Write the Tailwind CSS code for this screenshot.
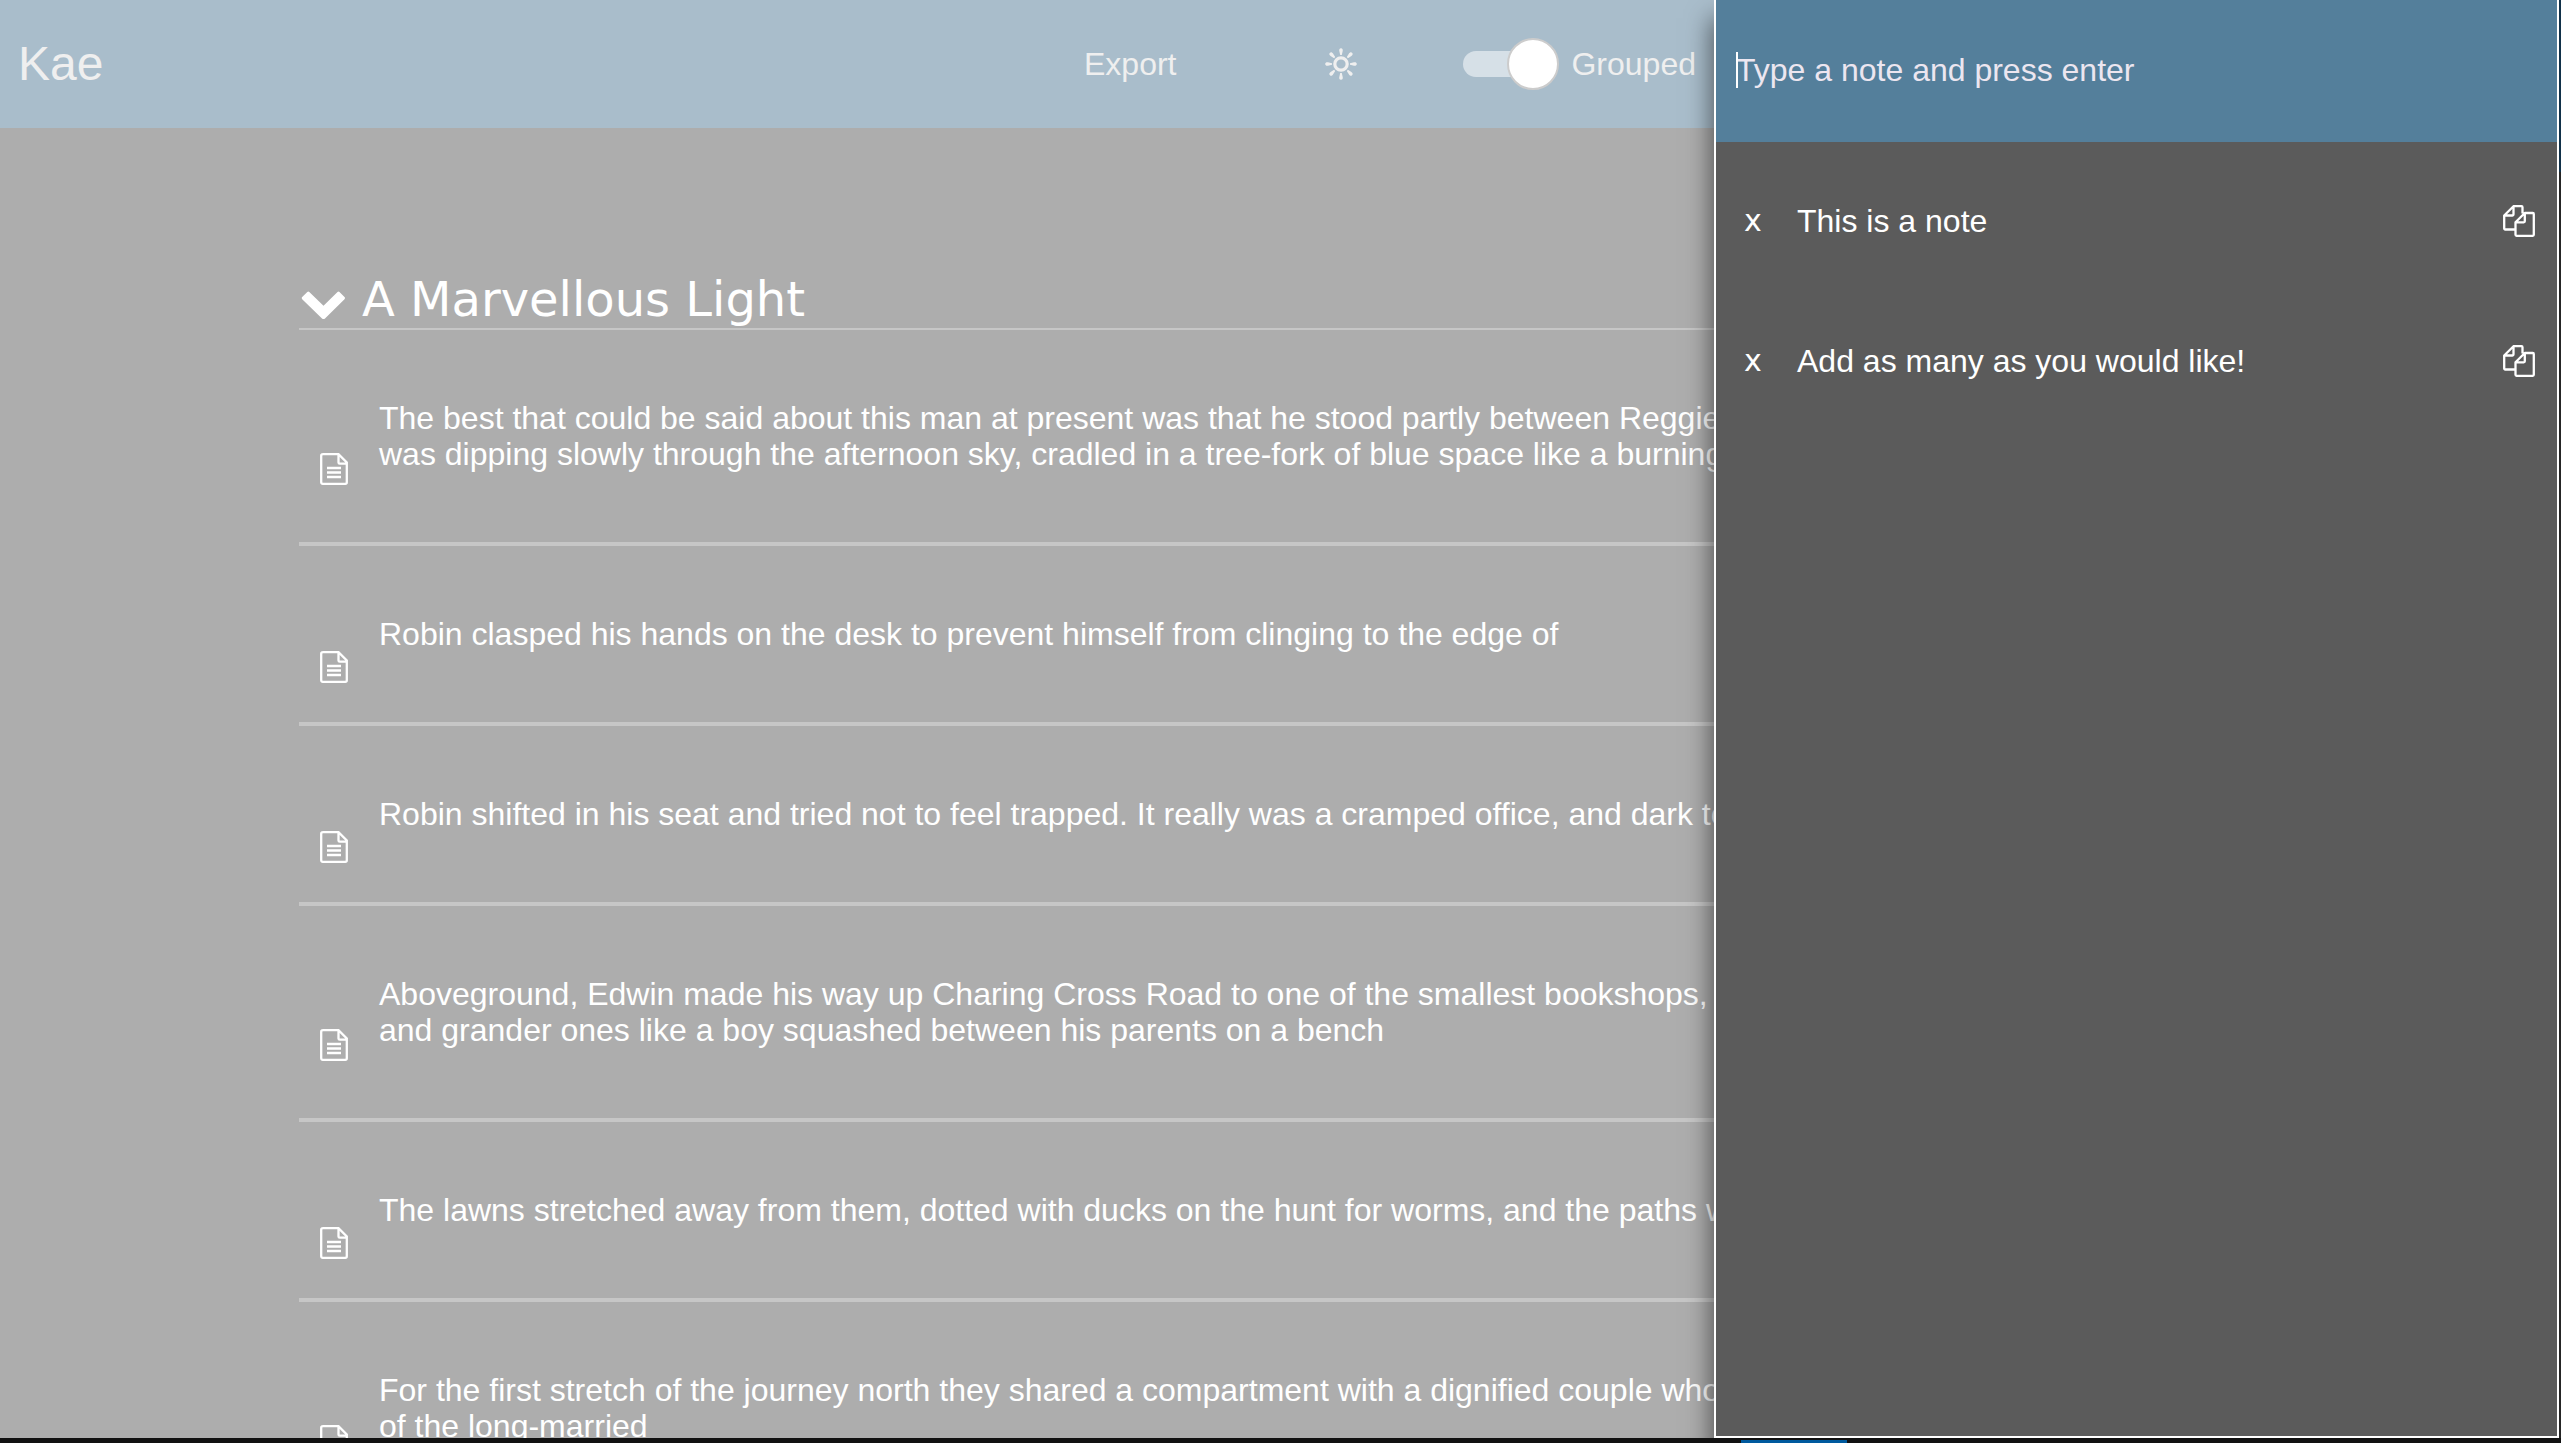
<!DOCTYPE html>
<html lang="en">
<head>
<meta charset="utf-8">
<title>Kae</title>
<script src="https://cdn.jsdelivr.net/npm/@tailwindcss/browser@4"></script>
</head>
<body class="h-screen overflow-hidden flex bg-[#111111] font-['Liberation_Sans',Arial,sans-serif] text-[32px] leading-9">
<svg class="hidden" aria-hidden="true">
  <symbol id="doc" viewBox="0 0 28 32"><path d="M2.500 1.200H18.500L26.800 9.500V29.300a1.500 1.500 0 0 1-1.500 1.500H2.700a1.500 1.500 0 0 1-1.500-1.500V2.700A1.500 1.500 0 0 1 2.700 1.200M18.500 1.200V9.500a1.200 1.200 0 0 0 1.200 1.200H26.800M7 15H21M7 19.500H21M7 24H21" fill="none" stroke="currentColor" stroke-width="2.300"/></symbol>
  <symbol id="copy" viewBox="0 0 32 32"><path d="M10.500 1.200H18.500a1 1 0 0 1 1 1V8.500M12.500 24.500H2.200a1 1 0 0 1-1-1V10.500L10.500 1.200V9.500a1 1 0 0 1-1 1H1.200M21.800 8H29.800a1 1 0 0 1 1 1V29.800a1 1 0 0 1-1 1H13.500a1 1 0 0 1-1-1V17.300L21.800 8V16.300a1 1 0 0 1-1 1H12.500" fill="none" stroke="currentColor" stroke-width="2.300" stroke-linejoin="round"/></symbol>
  <symbol id="ray" viewBox="0 0 32 32"><path d="M16 0.200C14.400 0.200 14 1.700 14.300 3L15.200 7H16.800L17.700 3C18 1.700 17.600 0.200 16 0.200Z"/></symbol>
</svg>
<div class="relative flex-1 mb-[5px] mr-[2px] overflow-hidden bg-[#adadad]">
  <header class="h-32 flex items-center bg-[#a9bdcb] text-[#efefef]">
    <h1 class="pl-[18px] text-[48px] leading-none flex-1">Kae</h1>
    <div class="flex items-center mr-[863px]">
      <button type="button" class="mr-[149px]">Export</button>
      <button type="button" aria-label="Theme" class="mr-[106px]">
        <svg class="block size-8" viewBox="0 0 32 32" fill="currentColor"><circle cx="16" cy="16" r="6.200" fill="none" stroke="currentColor" stroke-width="3.200"/><g id="rays"><use href="#ray" width="32" height="32"/><use href="#ray" width="32" height="32" transform="rotate(45 16 16)"/><use href="#ray" width="32" height="32" transform="rotate(90 16 16)"/><use href="#ray" width="32" height="32" transform="rotate(135 16 16)"/><use href="#ray" width="32" height="32" transform="rotate(180 16 16)"/><use href="#ray" width="32" height="32" transform="rotate(225 16 16)"/><use href="#ray" width="32" height="32" transform="rotate(270 16 16)"/><use href="#ray" width="32" height="32" transform="rotate(315 16 16)"/></g></svg>
      </button>
      <label class="flex items-center gap-3">
        <span class="relative flex items-center w-24 h-[52px]">
          <input type="checkbox" checked class="appearance-none w-20 h-[26px] rounded-full bg-[#d6e0e7]">
          <span class="absolute right-0 size-[52px] rounded-full bg-white border-2 border-[#cccccc]"></span>
        </span>
        Grouped
      </label>
    </div>
  </header>
  <main class="pt-[136px] pl-[299px] text-white">
    <h2 class="h-[66px] pt-[6px] flex items-center gap-[15px] border-b-2 border-[#c6c6c6] font-['DejaVu_Sans',sans-serif] text-[48px] leading-none">
      <svg class="w-12 h-7 mt-3" viewBox="0 0 48 28"><path d="M23 27.500L3.200 8.200Q2.200 7 3.200 6L8.300 0.900Q9.300 0 10.300 0.900L24.500 14.800L38.500 0.900Q39.500 0 40.500 0.900L45.500 6Q46.500 7 45.500 8.200L26 27.500Q24.500 28.500 23 27.500Z" fill="currentColor"/></svg>
      A Marvellous Light
    </h2>
    <ul class="whitespace-nowrap">
      <li class="flex items-center border-b-4 border-[#c6c6c6]"><svg class="w-7 h-8 mt-[66px] ml-[21px] mr-[31px]"><use href="#doc"/></svg><p class="py-[70px]">The best that could be said about this man at present was that he stood partly between Reggie<br>was dipping slowly through the afternoon sky, cradled in a tree-fork of blue space like a burning</p></li>
      <li class="flex items-center border-b-4 border-[#c6c6c6]"><svg class="w-7 h-8 mt-[66px] ml-[21px] mr-[31px]"><use href="#doc"/></svg><p class="py-[70px]">Robin clasped his hands on the desk to prevent himself from clinging to the edge of</p></li>
      <li class="flex items-center border-b-4 border-[#c6c6c6]"><svg class="w-7 h-8 mt-[66px] ml-[21px] mr-[31px]"><use href="#doc"/></svg><p class="py-[70px]">Robin shifted in his seat and tried not to feel trapped. It really was a cramped office, and dark to</p></li>
      <li class="flex items-center border-b-4 border-[#c6c6c6]"><svg class="w-7 h-8 mt-[66px] ml-[21px] mr-[31px]"><use href="#doc"/></svg><p class="py-[70px]">Aboveground, Edwin made his way up Charing Cross Road to one of the smallest bookshops,<br>and grander ones like a boy squashed between his parents on a bench</p></li>
      <li class="flex items-center border-b-4 border-[#c6c6c6]"><svg class="w-7 h-8 mt-[66px] ml-[21px] mr-[31px]"><use href="#doc"/></svg><p class="py-[70px]">The lawns stretched away from them, dotted with ducks on the hunt for worms, and the paths w</p></li>
      <li class="flex items-center border-b-4 border-[#c6c6c6]"><svg class="w-7 h-8 mt-[66px] ml-[21px] mr-[31px]"><use href="#doc"/></svg><p class="py-[70px]">For the first stretch of the journey north they shared a compartment with a dignified couple who<br>of the long-married</p></li>
    </ul>
  </main>
  <aside class="absolute inset-y-0 right-0 w-[845px] bg-[#5b5b5b] border-2 border-t-0 border-white text-white shadow-[0_20px_24px_2px_rgba(0,0,0,0.55)]">
    <div class="relative h-[142px] pb-[2px] flex items-center bg-[#547f9b]">
      <input type="text" aria-label="New note" placeholder="Type a note and press enter" class="w-full h-full px-5 outline-none placeholder:text-[#ece6f0] placeholder:opacity-100">
      <span class="absolute left-5 w-[2px] h-9 bg-white"></span>
    </div>
    <ul class="pt-[9px]">
      <li class="h-[140px] flex items-center pl-7 pr-[22px]"><button type="button" aria-label="Delete note" class="w-[53px] text-left font-['DejaVu_Sans',sans-serif] text-[30px]">x</button><span class="flex-1">This is a note</span><button type="button" aria-label="Copy note"><svg class="block size-8"><use href="#copy"/></svg></button></li>
      <li class="h-[140px] flex items-center pl-7 pr-[22px]"><button type="button" aria-label="Delete note" class="w-[53px] text-left font-['DejaVu_Sans',sans-serif] text-[30px]">x</button><span class="flex-1">Add as many as you would like!</span><button type="button" aria-label="Copy note"><svg class="block size-8"><use href="#copy"/></svg></button></li>
    </ul>
  </aside>
</div>
<div class="absolute top-0 right-0 w-[2px] h-[172px] bg-[#12324a]"></div>
<div class="absolute top-[172px] right-0 bottom-[5px] w-[2px] bg-[#262626]"></div>
<div class="absolute bottom-0 left-[1741px] w-[106px] h-[3px] bg-[#005a9e]"></div>
</body>
</html>
